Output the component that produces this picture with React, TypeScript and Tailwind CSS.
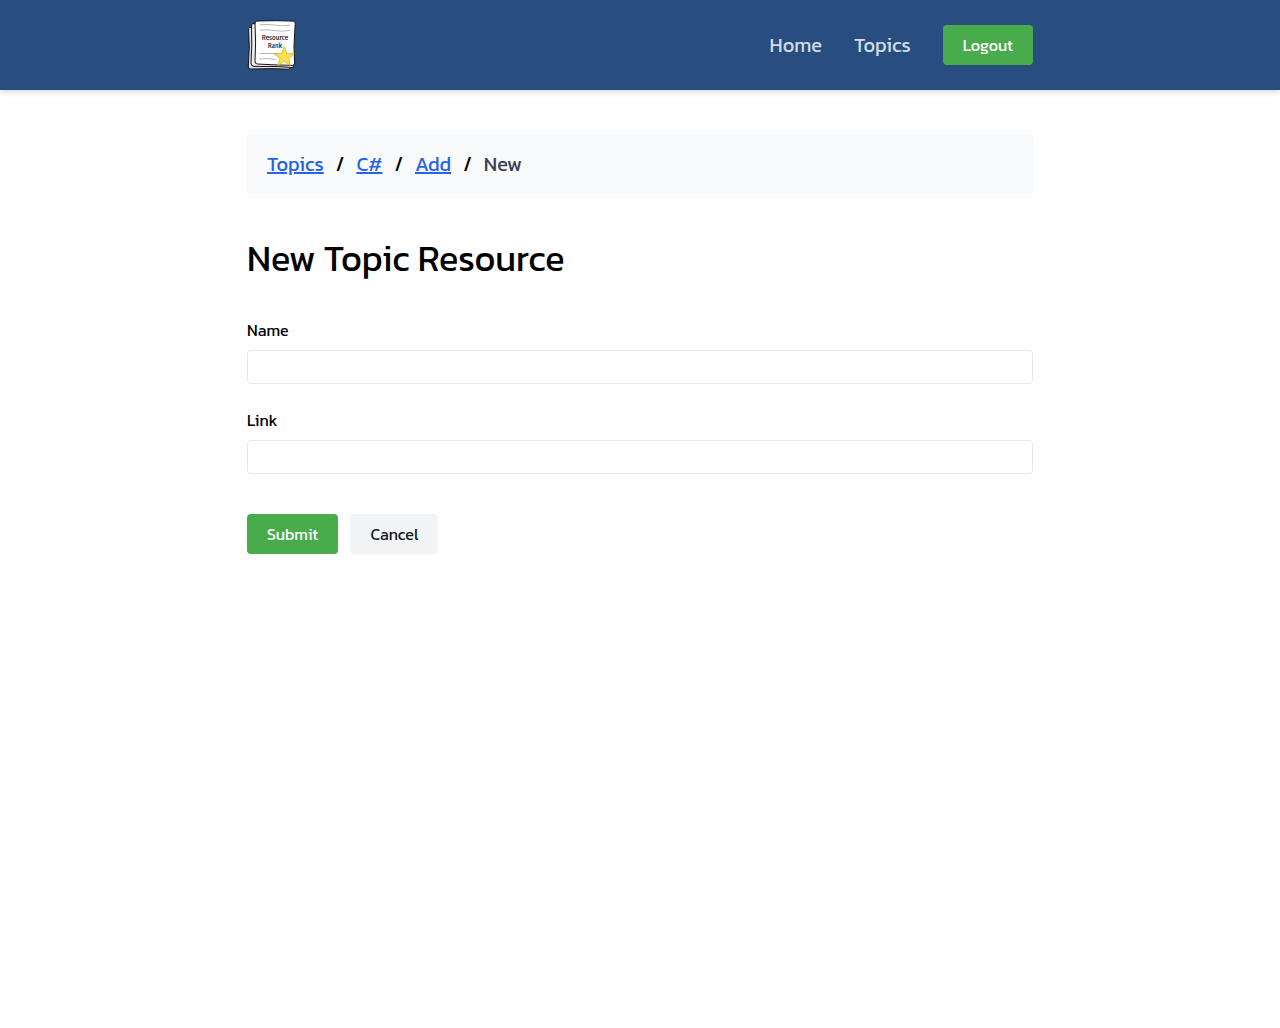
import type { ReactNode } from 'react';

function Logo() {
  return (
    <svg viewBox="0 0 50 50" className="size-[50px]" role="img" aria-label="Resource Rank">
      <g stroke="#171717" strokeWidth="1" strokeLinejoin="round">
        <path d="M2.5 7.5 Q1.3 8 1.6 11 L2.3 27 L1.3 46 Q1 49 3.5 49 L25 48.6 L42 49.3 L44 47 L42 7 Z" fill="#e0e0e0" />
        <path d="M5.5 3.8 Q4.3 4 4.5 7 L4.8 25 L4 43 Q4.2 46.5 7 46.4 L30 46.5 L46 47.6 L46.5 45 L45 4 Z" fill="#ededed" />
        <path d="M10 1 L29 .7 L46 1.1 Q48.5 1 48.2 4 L47 26 L47.6 43 Q47.8 45.6 45 45.4 L26 44.8 L10.5 44 Q7.8 44.2 8 41 L8.6 22 L8 4 Q8 1.2 10 1 Z" fill="#ffffff" />
      </g>
      <g fill="none" stroke="#a3a3a3" strokeWidth=".8">
        <path d="M13 4.8 Q20 3.7 27 5 T43 5.2" />
        <path d="M13 10.2 Q20 9.2 27 10.5 T43 10.5" />
        <path d="M12.5 33.5 H31" />
        <path d="M12.5 39 Q20 37.8 29 39.6" />
      </g>
      <g fill="#000000" fontFamily="'Noto Sans CJK SC', sans-serif" fontSize="6" fontWeight="500" textAnchor="middle">
        <text x="28" y="20">Resource</text>
        <text x="28" y="28">Rank</text>
      </g>
      <path
        d="M37.2 26.5 L40.1 33.5 L47.5 33.7 L41.7 38.5 L43.5 45.7 L37.3 41.5 L30.7 45.7 L33 38.5 L27 33.7 L34.6 33.5 Z"
        fill="#f8e34a"
        stroke="#bba52c"
        strokeWidth=".6"
        strokeLinejoin="round"
      />
    </svg>
  );
}

function NavLink({ children }: { children: ReactNode }) {
  return (
    <a href="#" className="text-xl text-[#d3dbe6]">
      {children}
    </a>
  );
}

function Crumb({ children }: { children: ReactNode }) {
  return (
    <li className="flex gap-3">
      <a href="#" className="text-[#2563eb] underline">
        {children}
      </a>
      <span aria-hidden="true">/</span>
    </li>
  );
}

function Field({ id, label }: { id: string; label: string }) {
  return (
    <div className="flex flex-col gap-2">
      <label htmlFor={id}>{label}</label>
      <input id={id} type="text" className="h-[34px] w-full rounded border border-gray-200 bg-white px-2" />
    </div>
  );
}

export default function App() {
  return (
    <div className="font-['Kanit','Lato',sans-serif] font-normal text-black antialiased">
      <header className="bg-[#284e80] shadow-md">
        <div className="mx-auto flex max-w-[826px] items-center justify-between p-5">
          <a href="#">
            <Logo />
          </a>
          <nav className="flex items-center gap-8">
            <NavLink>Home</NavLink>
            <NavLink>Topics</NavLink>
            <button type="button" className="h-10 rounded bg-[#48ac4c] px-5 text-white">
              Logout
            </button>
          </nav>
        </div>
      </header>
      <main className="mx-auto flex max-w-[826px] flex-col gap-10 px-5 py-10">
        <nav aria-label="Breadcrumb" className="rounded bg-gray-50 p-5">
          <ol className="flex gap-3 text-xl">
            <Crumb>Topics</Crumb>
            <Crumb>C#</Crumb>
            <Crumb>Add</Crumb>
            <li className="text-[#374151]">New</li>
          </ol>
        </nav>
        <h1 className="text-4xl">New Topic Resource</h1>
        <form className="flex flex-col gap-6">
          <Field id="name" label="Name" />
          <Field id="link" label="Link" />
          <div className="mt-4 flex gap-3">
            <button type="submit" className="h-10 rounded bg-[#48ac4c] px-5 text-white">
              Submit
            </button>
            <button type="button" className="h-10 rounded bg-[#f3f4f6] px-5 text-[#111827]">
              Cancel
            </button>
          </div>
        </form>
      </main>
    </div>
  );
}
